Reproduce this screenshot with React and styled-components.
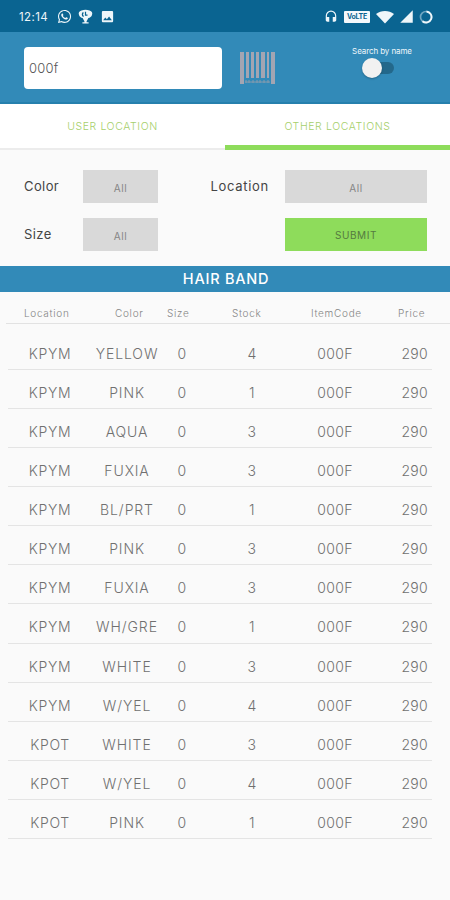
import React from 'react'

import styled, { createGlobalStyle } from 'styled-components'
import { FaWhatsapp } from 'react-icons/fa'
import { MdHeadset, MdImage, MdSignalCellular4Bar } from 'react-icons/md'

const GlobalStyle = createGlobalStyle`
    * {
        box-sizing: border-box;
    }

    body {
        margin: 0;
        background: #fafafa;
        font-family: Inter, "Liberation Sans", sans-serif;
    }
`

const Page = styled.div`
    width: 450px;
    height: 900px;
    overflow: hidden;
    background: #fafafa;
    color: #757575;
`

const StatusBar = styled.div`
    display: flex;
    align-items: center;
    justify-content: space-between;
    height: 32px;
    padding: 1px 17px 0 19px;
    background: #0a6491;
    color: #eef6fa;

    svg {
        display: block;
    }
`

const StatusGroup = styled.div`
    display: flex;
    align-items: center;
    gap: ${props => props.$gap};
`

const Clock = styled.span`
    width: 31px;
    font-size: 11.5px;
    line-height: 14px;
    letter-spacing: .4px;
    white-space: nowrap;
`

const NetworkBadge = styled.span`
    display: flex;
    align-items: center;
    justify-content: center;
    width: 26px;
    height: 12px;
    margin: 0 1px;
    border-radius: 1px;
    background: #f4f8fb;
    color: #0a6491;
    font-size: 7px;
    font-weight: 700;
    letter-spacing: -.3px;
`

const Toolbar = styled.header`
    display: flex;
    align-items: flex-start;
    height: 72px;
    padding: 15px 37px 0 24px;
    border-bottom: 2px solid #2680ad;
    background: #328ab8;
`

const SearchInput = styled.input`
    width: 198px;
    height: 42px;
    margin-right: 18px;
    padding: 0 5px;
    border: 0;
    border-radius: 4px;
    outline: none;
    background: #fff;
    color: #555;
    font: 300 13px Inter, "Liberation Sans", sans-serif;
    letter-spacing: .2px;
`

const BarcodeButton = styled.button`
    width: 36px;
    height: 33px;
    margin-top: 5px;
    padding: 0;
    border: 0;
    background: none;
`

const NameSearch = styled.label`
    display: flex;
    flex-direction: column;
    align-items: center;
    width: 62px;
    margin-left: auto;
    color: #eef6fb;
    font-size: 8px;
    line-height: 9px;
    letter-spacing: -.1px;
    white-space: nowrap;
`

const SwitchTrack = styled.span`
    display: flex;
    align-items: center;
    width: 30px;
    height: 12px;
    margin: 6px 6px 0 0;
    border-radius: 6px;
    background: linear-gradient(90deg, transparent 8px, #23688b 8px);
`

const SwitchThumb = styled.span`
    width: 20px;
    height: 20px;
    margin-left: -2px;
    border-radius: 50%;
    background: #f1f1f1;
    box-shadow: 0 1px 2px rgba(0, 0, 0, .25);
`

const Tabs = styled.nav`
    display: grid;
    grid-template-columns: 1fr 1fr;
    height: 46px;
    background: #fff;
`

const Tab = styled.button`
    padding: ${props => props.$active ? '4px' : '1px'} 0 0;
    border: 0;
    border-bottom: ${props => props.$active ? '5px solid #8edc5b' : '2px solid #ececec'};
    background: none;
    color: #a6cf6b;
    font: 300 10.5px Inter, "Liberation Sans", sans-serif;
    letter-spacing: .6px;
`

const Filters = styled.section`
    display: grid;
    grid-template-columns: 59px 75px 127px 142px;
    grid-template-rows: 33px 33px;
    row-gap: 15px;
    align-items: center;
    height: 116px;
    padding: 20px 23px 0 24px;
    align-content: start;
`

const FilterLabel = styled.span`
    margin-top: -2px;
    padding-left: ${props => props.$indent || '0'};
    color: #444;
    font-size: 13px;
    letter-spacing: ${props => props.$spacing || '.4px'};
`

const FilterButton = styled.button`
    height: 33px;
    padding: 2px 0 0;
    border: 0;
    background: ${props => props.$submit ? '#8edc5b' : '#d9d9d9'};
    color: ${props => props.$submit ? '#557a40' : '#858585'};
    font: 400 10px Inter, "Liberation Sans", sans-serif;
    letter-spacing: .55px;

    &:last-child {
        grid-column: 4;
        padding-top: 0;
    }
`

const ProductTitle = styled.h1`
    height: 26px;
    margin: 0;
    padding-left: 2px;
    background: #328ab8;
    color: #fff;
    font-size: 14.5px;
    font-weight: 500;
    line-height: 26px;
    letter-spacing: .75px;
    text-align: center;
`

const TableHead = styled.div`
    display: grid;
    grid-template-columns: 91px 52px 65px 79px 87px 1fr;
    height: 32px;
    margin-left: 6px;
    padding: 11px 0 0 18px;
    border-bottom: 1px solid #e2e2e2;
    color: #858585;
    font-size: 10px;
    font-weight: 300;
    line-height: 20px;
    letter-spacing: .7px;
`

const HeadCell = styled.span`
    white-space: nowrap;
`

const TableBody = styled.div`
    padding: 7px 18px 0 8px;
`

const TableRow = styled.div`
    display: grid;
    grid-template-columns: 84px 70px 40px 100px 66px 64px;
    height: 39.07px;
    padding-top: 13px;
    border-bottom: 1px solid #e4e4e4;
    color: #707070;
    font-size: 14px;
    font-weight: 300;
    line-height: 20px;
`

const Cell = styled.span`
    min-width: 0;
    padding-right: ${props => props.$price ? '4px' : '0'};
    text-align: ${props => props.$price ? 'right' : 'center'};
    letter-spacing: ${props => props.$spacing || '.3px'};
    white-space: nowrap;
`

const headings = ['Location', 'Color', 'Size', 'Stock', 'ItemCode', 'Price']

const stock = [
    ['KPYM', 'YELLOW', 0, 4, '000F', 290],
    ['KPYM', 'PINK', 0, 1, '000F', 290],
    ['KPYM', 'AQUA', 0, 3, '000F', 290],
    ['KPYM', 'FUXIA', 0, 3, '000F', 290],
    ['KPYM', 'BL/PRT', 0, 1, '000F', 290],
    ['KPYM', 'PINK', 0, 3, '000F', 290],
    ['KPYM', 'FUXIA', 0, 3, '000F', 290],
    ['KPYM', 'WH/GRE', 0, 1, '000F', 290],
    ['KPYM', 'WHITE', 0, 3, '000F', 290],
    ['KPYM', 'W/YEL', 0, 4, '000F', 290],
    ['KPOT', 'WHITE', 0, 3, '000F', 290],
    ['KPOT', 'W/YEL', 0, 4, '000F', 290],
    ['KPOT', 'PINK', 0, 1, '000F', 290],
]

function TrophyIcon() {
    return (
        <svg width="15" height="15" viewBox="0 0 15 15">
            <path d="M3.500 1.500Q7.500 0 11.500 1.500C14 2 14.800 4 14 6c-.6 1.700-2 2.700-3.600 3L8.600 12.200v1h2v1.300H4.400v-1.300h2v-1L4.600 9C3 8.700 1.600 7.700 1 6 .2 4 1 2 3.500 1.500Z" fill="currentColor" />
            <path d="M5.300 3.300c-1 1.200-.9 3.300.2 4.400M7.500 2.800v3.400h2" fill="none" stroke="#0a6491" strokeWidth="1.200" />
        </svg>
    )
}

function WifiIcon() {
    return (
        <svg width="18" height="14" viewBox="0 0 18 14" fill="currentColor">
            <path d="M0 4C5-.1 13-.1 18 4L9 13.500Z" />
        </svg>
    )
}

function LoadingIcon() {
    return (
        <svg width="14" height="14" viewBox="0 0 14 14" fill="none">
            <circle cx="7" cy="7" r="5.500" stroke="#6fa6c2" strokeWidth="1.700" />
            <path d="M7.500 1.500a5.500 5.500 0 1 1-4 9.700" stroke="currentColor" strokeWidth="1.900" />
        </svg>
    )
}

function BarcodeIcon() {
    return (
        <svg width="36" height="33" viewBox="0 0 36 33" fill="#a3a5b2">
            <path d="M0 0h4v32H0zM6 0h3v26H6zM11 0h3v26h-3zM16 0h3v26h-3zM21 0h4v26h-4zM27 0h2v26h-2zM31 0h4v32h-4z" />
            <path d="M5 30h25M6 28v3M9 28v3M13 28v3M17 28v3M20 28v3M24 28v3M28 28v3" stroke="#879bad" strokeWidth="1" />
        </svg>
    )
}

function StockRow(props) {
    const [location, color, size, count, code, price] = props.data

    return (
        <TableRow>
            <Cell $spacing=".7px">{location}</Cell>
            <Cell $spacing=".9px">{color}</Cell>
            <Cell>{size}</Cell>
            <Cell>{count}</Cell>
            <Cell>{code}</Cell>
            <Cell $price>{price}</Cell>
        </TableRow>
    )
}

export default function App() {
    return (
        <Page>
            <GlobalStyle />
            <StatusBar>
                <StatusGroup $gap="6.5px">
                    <Clock>12:14</Clock>
                    <FaWhatsapp size={15} />
                    <TrophyIcon />
                    <MdImage size={15} />
                </StatusGroup>
                <StatusGroup $gap="5px">
                    <MdHeadset size={14} />
                    <NetworkBadge>VoLTE</NetworkBadge>
                    <WifiIcon />
                    <MdSignalCellular4Bar size={15} />
                    <LoadingIcon />
                </StatusGroup>
            </StatusBar>

            <Toolbar>
                <SearchInput defaultValue="000f" />
                <BarcodeButton aria-label="Scan barcode">
                    <BarcodeIcon />
                </BarcodeButton>
                <NameSearch>
                    Search by name
                    <SwitchTrack>
                        <SwitchThumb />
                    </SwitchTrack>
                </NameSearch>
            </Toolbar>

            <Tabs>
                <Tab>USER LOCATION</Tab>
                <Tab $active>OTHER LOCATIONS</Tab>
            </Tabs>

            <Filters>
                <FilterLabel>Color</FilterLabel>
                <FilterButton>All</FilterButton>
                <FilterLabel $indent="52.5px" $spacing=".7px">Location</FilterLabel>
                <FilterButton>All</FilterButton>
                <FilterLabel>Size</FilterLabel>
                <FilterButton>All</FilterButton>
                <FilterButton $submit>SUBMIT</FilterButton>
            </Filters>

            <ProductTitle>HAIR BAND</ProductTitle>

            <TableHead>
                {headings.map(h => <HeadCell key={h}>{h}</HeadCell>)}
            </TableHead>
            <TableBody>
                {stock.map((row, i) => <StockRow key={i} data={row} />)}
            </TableBody>
        </Page>
    )
}
